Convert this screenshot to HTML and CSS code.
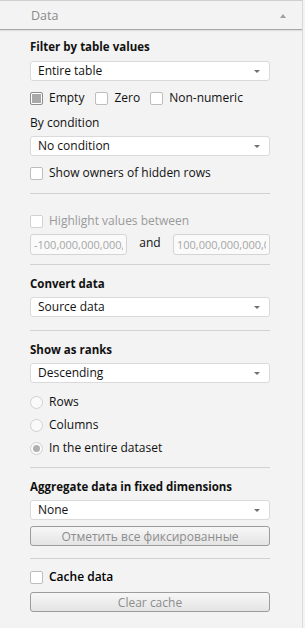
FILE: index.html
```html
<!DOCTYPE html>
<html lang="en">
<head>
<meta charset="UTF-8">
<meta name="viewport" content="width=device-width, initial-scale=1.0">
<title>Data</title>
<link rel="stylesheet" href="styles.css">
</head>
<body>

<div class="panel">
  <div class="panel-head">
    <span>Data</span>
    <span class="head-arrow"></span>
  </div>

  <div class="panel-body">
    <div class="section first">
      <div class="title">Filter by table values</div>
      <div class="select">Entire table<span class="caret"></span></div>
      <div class="check-row gap9">
        <label class="check"><span class="box partial"></span>Empty</label>
        <label class="check"><span class="box"></span>Zero</label>
        <label class="check"><span class="box"></span>Non-numeric</label>
      </div>
      <div class="label gap9">By condition</div>
      <div class="select gap5">No condition<span class="caret"></span></div>
      <label class="check gap9"><span class="box"></span>Show owners of hidden rows</label>
    </div>

    <div class="section highlight">
      <label class="check disabled"><span class="box"></span>Highlight values between</label>
      <div class="range">
        <input type="text" class="num" value="-100,000,000,000,000" disabled>
        <span class="and">and</span>
        <input type="text" class="num" value="100,000,000,000,000" disabled>
      </div>
    </div>

    <div class="section">
      <div class="title">Convert data</div>
      <div class="select gap5">Source data<span class="caret"></span></div>
    </div>

    <div class="section ranks">
      <div class="title">Show as ranks</div>
      <div class="select gap5">Descending<span class="caret"></span></div>
      <label class="radio gap11"><span class="dot"></span>Rows</label>
      <label class="radio gap7"><span class="dot"></span>Columns</label>
      <label class="radio gap7"><span class="dot on"></span>In the entire dataset</label>
    </div>

    <div class="section aggregate">
      <div class="title">Aggregate data in fixed dimensions</div>
      <div class="select gap5">None<span class="caret"></span></div>
      <button class="btn">Отметить все фиксированные</button>
    </div>

    <div class="section last">
      <label class="check strong"><span class="box"></span>Cache data</label>
      <button class="btn clear">Clear cache</button>
    </div>
  </div>
</div>

</body>
</html>
```

FILE: styles.css
```css
body {
  margin: 0;
  background-color: #f3f3f3;
  font-family: "Open Sans", "Noto Sans", sans-serif;
  font-size: 12px;
  color: #111;
}

.panel {
  width: 302px;
  height: 627px;
  border-top: 1px solid #cfcfcf;
  border-right: 1px solid #dcdcdc;
  background-color: #f3f3f3;
}

.panel-head {
  height: 28px;
  padding: 0 16px 0 31px;
  display: flex;
  align-items: center;
  justify-content: space-between;
  font-size: 12.5px;
  color: #8a8a8a;
  border-bottom: 1px solid #a9a9a9;
  box-shadow: 0 1px 1px rgba(0, 0, 0, 0.08);
}

.head-arrow {
  width: 0;
  height: 0;
  border-left: 3px solid transparent;
  border-right: 3px solid transparent;
  border-bottom: 4px solid #a0a0a0;
  margin-top: 2px;
}

.panel-body {
  padding: 0 32px 0 30px;
}

.section {
  border-top: 1px solid #d2d2d2;
  padding-top: 11px;
  padding-bottom: 13px;
}

.section.first {
  border-top: none;
  padding-top: 9px;
  padding-bottom: 12px;
}

.section.highlight {
  padding-top: 19px;
  padding-bottom: 9px;
}

.section.ranks {
  padding-bottom: 11px;
}

.section.aggregate {
  padding-bottom: 12px;
}

.section.last {
  padding-top: 10px;
  padding-bottom: 0;
}

.title {
  font-weight: bold;
  line-height: 16px;
  font-size: 11.5px;
}

.label {
  line-height: 16px;
}

.select {
  position: relative;
  height: 18px;
  line-height: 18px;
  margin-top: 6px;
  padding-left: 7px;
  background-color: #fff;
  border: 1px solid #dadada;
  border-radius: 3px;
}

.caret {
  position: absolute;
  right: 9px;
  top: 8px;
  width: 0;
  height: 0;
  border-left: 3px solid transparent;
  border-right: 3px solid transparent;
  border-top: 3px solid #707070;
}

.gap5 { margin-top: 5px; }
.gap7 { margin-top: 7px; }
.gap9 { margin-top: 9px; }
.gap11 { margin-top: 11px; }

.check-row {
  display: flex;
  gap: 10px;
}

.check, .radio {
  display: flex;
  align-items: center;
  height: 16px;
  line-height: 16px;
}

.check-row .check:nth-child(2) {
  margin-left: 1px;
}

.box {
  width: 11px;
  height: 11px;
  margin-right: 6px;
  background-color: #fff;
  border: 1px solid #bdbdbd;
  border-radius: 2px;
  box-sizing: content-box;
}

.box.partial {
  background-color: #a9a9a9;
  box-shadow: inset 0 0 0 1px #fff;
  border-color: #8e8e8e;
}

.check.disabled {
  color: #9a9a9a;
}

.check.disabled .box {
  border-color: #d2d2d2;
}

.check.strong {
  font-weight: 600;
  color: #000;
}

.range {
  display: flex;
  align-items: center;
  margin-top: 5px;
}

.num {
  width: 97px;
  height: 21px;
  padding: 0 3px;
  box-sizing: border-box;
  font-family: inherit;
  font-size: 11px;
  color: #a6a6a6;
  background-color: #fafafa;
  border: 1px solid #d4d4d4;
  border-radius: 3px;
}

.and {
  flex: 1;
  text-align: center;
  margin-top: -4px;
}

.dot {
  position: relative;
  width: 11px;
  height: 11px;
  margin-right: 6px;
  border: 1px solid #d0d0d0;
  border-radius: 50%;
  background-color: #fafafa;
}

.dot.on::after {
  content: "";
  position: absolute;
  left: 2px;
  top: 2px;
  width: 7px;
  height: 7px;
  border-radius: 50%;
  background-color: #b0b0b0;
}

.btn {
  display: block;
  width: 100%;
  height: 20px;
  margin-top: 6px;
  padding: 0;
  font-family: inherit;
  font-size: 12px;
  color: #8c8c8c;
  background: linear-gradient(#f7f7f7, #e4e4e4);
  border: 1px solid #9c9c9c;
  border-radius: 3px;
}

.btn.clear {
  margin-top: 7px;
}
```
